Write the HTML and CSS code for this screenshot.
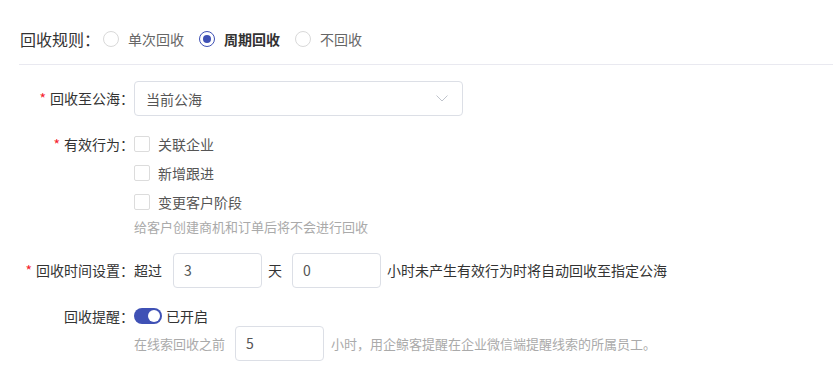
FILE: index.html
```html
<!DOCTYPE html>
<html lang="zh-CN">
<head>
<meta charset="utf-8">
<title>回收规则</title>
<link rel="stylesheet" href="styles.css">
</head>
<body>
<div class="page">
  <div class="header">
    <span class="title">回收规则：</span>
    <label class="radio"><span class="radio-dot"></span><span class="radio-text">单次回收</span></label>
    <label class="radio checked"><span class="radio-dot"></span><span class="radio-text">周期回收</span></label>
    <label class="radio"><span class="radio-dot"></span><span class="radio-text">不回收</span></label>
  </div>

  <div class="form">
    <div class="row row-select">
      <div class="label tall"><span class="req">*</span>回收至公海：</div>
      <div class="content">
        <div class="select">
          <span>当前公海</span>
          <svg class="arrow" width="12" height="7" viewBox="0 0 12 7"><path d="M0.5 0.5 L6 6 L11.5 0.5" fill="none" stroke="#c0c4cc" stroke-width="1"/></svg>
        </div>
      </div>
    </div>

    <div class="row row-checks">
      <div class="label"><span class="req">*</span>有效行为：</div>
      <div class="content">
        <label class="check"><span class="box"></span>关联企业</label>
        <label class="check"><span class="box"></span>新增跟进</label>
        <label class="check last"><span class="box"></span>变更客户阶段</label>
        <div class="hint">给客户创建商机和订单后将不会进行回收</div>
      </div>
    </div>

    <div class="row row-time">
      <div class="label tall"><span class="req">*</span>回收时间设置：</div>
      <div class="content inline">
        <span class="txt">超过</span>
        <div class="input">3</div>
        <span class="txt">天</span>
        <div class="input">0</div>
        <span class="txt">小时未产生有效行为时将自动回收至指定公海</span>
      </div>
    </div>

    <div class="row row-remind">
      <div class="label">回收提醒：</div>
      <div class="content">
        <div class="switch-line">
          <span class="switch"><span class="knob"></span></span>
          <span class="switch-text">已开启</span>
        </div>
        <div class="inline sub">
          <span class="muted">在线索回收之前</span>
          <div class="input">5</div>
          <span class="muted">小时，用企鲸客提醒在企业微信端提醒线索的所属员工。</span>
        </div>
      </div>
    </div>
  </div>
</div>
</body>
</html>
```

FILE: styles.css
```css
* { box-sizing: border-box; }
html, body { margin: 0; padding: 0; background: #ffffff; }
body {
  font-family: "Noto Sans CJK SC", "Noto Sans", sans-serif;
  font-size: 14px;
  color: #333333;
}
.page { padding-left: 19px; }

.header {
  display: flex;
  align-items: center;
  height: 65px;
  padding-top: 27px;
  padding-bottom: 13px;
  border-bottom: 1px solid #e9e9f0;
}
.title {
  font-size: 16px;
  line-height: 24px;
  color: #333333;
  margin-left: 1px;
  margin-right: 3px;
}
.radio {
  display: flex;
  align-items: center;
  margin-right: 15px;
  line-height: 20px;
}
.radio-dot {
  width: 16px;
  height: 16px;
  border: 1px solid #d9d9d9;
  border-radius: 50%;
  margin-right: 9px;
  display: flex;
  align-items: center;
  justify-content: center;
}
.radio-text { color: #666666; font-size: 14px; }
.radio.checked .radio-dot { border-color: #3f51b5; }
.radio.checked .radio-dot::after {
  content: "";
  width: 8px;
  height: 8px;
  border-radius: 50%;
  background: #3f51b5;
}
.radio.checked .radio-text { color: #333333; font-weight: 700; }

.form { padding-top: 16px; }
.row { display: flex; align-items: flex-start; }
.label {
  width: 115px;
  flex: none;
  text-align: right;
  line-height: 20px;
  color: #333333;
  white-space: nowrap;
}
.label.tall { line-height: 35px; }
.req { color: #f5222d; margin-right: 4px; }
.content { flex: 1; }
.inline { display: flex; align-items: center; }

.row-select { margin-bottom: 18px; }
.select {
  width: 329px;
  height: 35px;
  border: 1px solid #dcdfe6;
  border-radius: 4px;
  padding: 0 11px;
  display: flex;
  align-items: center;
  justify-content: space-between;
  color: #555555;
}
.arrow { margin-right: 3px; }

.row-checks { margin-bottom: 16px; }
.check {
  display: flex;
  align-items: center;
  line-height: 20px;
  margin-bottom: 9px;
  color: #555555;
}
.check.last { margin-bottom: 5px; }
.box {
  width: 16px;
  height: 16px;
  border: 1px solid #dcdcdc;
  border-radius: 2px;
  margin-right: 8px;
}
.hint { font-size: 13px; line-height: 20px; color: #aaaaaa; }

.row-time { margin-bottom: 18px; }
.txt { color: #333333; line-height: 35px; }
.input {
  width: 89px;
  height: 35px;
  border: 1px solid #dcdfe6;
  border-radius: 4px;
  padding: 0 10px;
  line-height: 33px;
  color: #555555;
  margin-left: 11px;
  margin-right: 6px;
}
.input + .txt { }
.row-time .input:nth-of-type(2) { margin-left: 10px; }

.switch-line { display: flex; align-items: center; height: 20px; }
.switch {
  width: 28px;
  height: 16px;
  border-radius: 8px;
  background: #3f51b5;
  position: relative;
  margin-right: 4px;
}
.knob {
  position: absolute;
  right: 2px;
  top: 2px;
  width: 12px;
  height: 12px;
  border-radius: 50%;
  background: #ffffff;
}
.switch-text { color: #333333; line-height: 20px; }
.sub .input { margin-left: 10px; margin-right: 7px; }
.muted { font-size: 13px; color: #aaaaaa; line-height: 35px; }
.sub .muted:last-child { color: #aaaaaa; }
```
